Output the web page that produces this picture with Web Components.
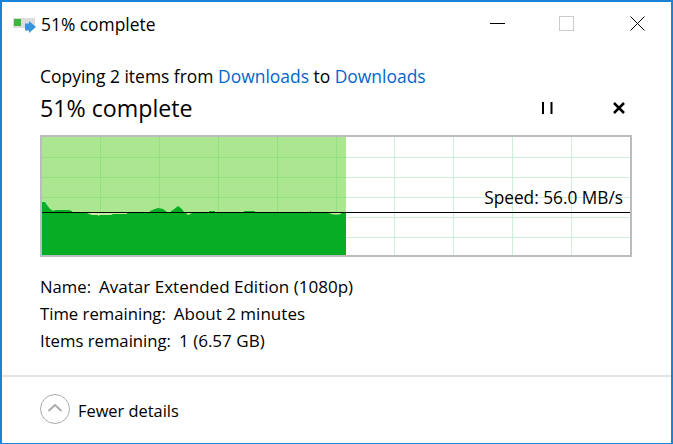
<!DOCTYPE html>
<html>
<head>
<meta charset="utf-8">
<title>51% complete</title>
<style>
html, body{ margin:0; height:100%; }
body{ font-family:"Open Sans","Noto Sans",sans-serif; color:#000; background:#fff; }
a{ color:#0066cc; }
</style>
</head>
<body>

<copy-dialog>
    <title-bar slot="title">51% complete</title-bar>

    <span slot="summary">Copying 2 items from <a>Downloads</a> to <a>Downloads</a></span>

    <progress-head slot="head">51% complete</progress-head>

    <speed-chart slot="chart" speed="Speed: 56.0 MB/s"></speed-chart>

    <detail-row slot="details" label="Name:">Avatar Extended Edition (1080p)</detail-row>
    <detail-row slot="details" label="Time remaining:">About 2 minutes</detail-row>
    <detail-row slot="details" label="Items remaining:">1 (6.57 GB)</detail-row>

    <details-toggle slot="footer">Fewer details</details-toggle>
</copy-dialog>

<script>
// #region DIALOG
class CopyDialog extends HTMLElement{
    constructor(){
        super();
        this.attachShadow( { mode: 'open' } ).innerHTML = `
<style>
:host{
    display         : flex;
    flex-direction  : column;
    box-sizing      : border-box;
    width           : 673px;
    height          : 444px;
    background      : #fff;
    border          : solid #1883d7;
    border-width    : 2px 2px 1px 2px;
    font-family     : "Open Sans", "Noto Sans", sans-serif;
    font-size       : 17px;
}
.main{
    flex            : 1;
    padding         : 19px 39px 0 38px;
}
.summary{ height:24px; line-height:24px; font-size:17.45px; white-space:nowrap; }
::slotted(span){ display:block; }
.details{
    display         : flex;
    flex-direction  : column;
    margin-top      : 16px;
}
</style>
<slot name="title"></slot>
<div class="main">
    <div class="summary"><slot name="summary"></slot></div>
    <slot name="head"></slot>
    <slot name="chart"></slot>
    <div class="details"><slot name="details"></slot></div>
</div>
<slot name="footer"></slot>`;
    }
}
customElements.define( 'copy-dialog', CopyDialog );
// #endregion

// #region TITLE BAR
class TitleBar extends HTMLElement{
    constructor(){
        super();
        this.attachShadow( { mode: 'open' } ).innerHTML = `
<style>
:host{
    display         : flex;
    align-items     : center;
    height          : 43px;
    flex            : none;
    font-size       : 17.4px;
}
.ico{ margin-left:11px; margin-right:4px; flex:none; }
.txt{ flex:1; }
.btns{ display:flex; align-items:center; margin-right:26px; }
svg{ display:block; }
</style>
<svg class="ico" width="24" height="19" viewBox="0 0 24 19">
    <rect x="0" y="4" width="22" height="10" fill="#dcdcdc"/>
    <rect x="1" y="5" width="7" height="7" fill="#3cb53c"/>
    <path d="M12 9.500h4V7L23 13 16 19V16.500H12z" fill="#3a93e0"/>
</svg>
<div class="txt"><slot></slot></div>
<div class="btns">
    <svg width="15" height="15" viewBox="0 0 15 15" style="margin-right:54px"><path d="M0 7.500H15" stroke="#000" fill="none"/></svg>
    <svg width="15" height="15" viewBox="0 0 15 15" style="margin-right:56px"><rect x=".5" y=".5" width="14" height="14" stroke="#ccc" fill="none"/></svg>
    <svg width="15" height="15" viewBox="0 0 15 15"><path d="M.5 .5L14.500 14.500M14.500 .5L.5 14.500" stroke="#000" fill="none"/></svg>
</div>`;
    }
}
customElements.define( 'title-bar', TitleBar );
// #endregion

// #region HEAD
class ProgressHead extends HTMLElement{
    constructor(){
        super();
        this.attachShadow( { mode: 'open' } ).innerHTML = `
<style>
:host{
    display         : flex;
    align-items     : center;
    height          : 30px;
    margin-top      : 5px;
    margin-bottom   : 12px;
    font-size       : 23.2px;
}
.txt{ flex:1; }
svg{ display:block; }
</style>
<div class="txt"><slot></slot></div>
<svg width="11" height="12" viewBox="0 0 11 12" style="margin-right:60px"><path d="M1 0V12M9.500 0V12" stroke="#000" stroke-width="2" fill="none"/></svg>
<svg width="12" height="12" viewBox="0 0 12 12" style="margin-right:7px"><path d="M1 1L11 11M11 1L1 11" stroke="#000" stroke-width="2.500" fill="none"/></svg>`;
    }
}
customElements.define( 'progress-head', ProgressHead );
// #endregion

// #region CHART
class SpeedChart extends HTMLElement{
    constructor(){
        super();
        const sroot = this.attachShadow( { mode: 'open' } );
        sroot.innerHTML = `
<style>
:host{
    display         : block;
    position        : relative;
    box-sizing      : border-box;
    width           : 592px;
    height          : 122px;
    border          : 2px solid #bcbcbc;
    font-size       : 17.25px;
}
svg{ display:block; }
.speed{
    position        : absolute;
    right           : 7px;
    top             : 49px;
    line-height     : 24px;
    white-space     : nowrap;
}
</style>
<svg width="588" height="118" viewBox="42 137 588 118" shape-rendering="crispEdges"></svg>
<div class="speed"></div>`;
        this._svg   = sroot.querySelector( 'svg' );
        this._speed = sroot.querySelector( '.speed' );
    }

    connectedCallback(){
        this._speed.textContent = this.getAttribute( 'speed' );
        this._svg.innerHTML     = this.draw();
    }

    draw(){
        const done = 346;
        let s = `<rect x="42" y="137" width="${done-42}" height="118" fill="#abe690"/>`;

        // grid, each line has a stronger tint over the filled part
        for( const x of [ 100, 159, 218, 277, 336, 394, 453, 512, 571 ] ){
            s += `<rect x="${x}" y="137" width="1" height="118" fill="${x < done ? '#93e081' : '#cfeeda'}"/>`;
        }
        for( let y=157; y < 250; y+=20 ){
            s += `<rect x="42" y="${y}" width="${done-42}" height="1" fill="#93e081"/>`;
            s += `<rect x="${done}" y="${y}" width="${630-done}" height="1" fill="#cfeeda"/>`;
        }

        // dips under the average line
        s += `<rect x="87" y="213" width="40" height="3" fill="#c9e9a4"/>`;
        s += `<rect x="186" y="213" width="6" height="3" fill="#c9e9a4"/>`;
        s += `<rect x="329" y="213" width="14" height="3" fill="#c9e9a4"/>`;

        const area = 'M42 255V202H45L47 205L50 209L52 210L53 211L55 210H69L72 211V212H87V213L89 214L92 215H98V216L100 215H110L111 215L113 214H127V212H150V211L155 209L158 208L163 209L167 212H171V211L173 210L178 206L182 209L184 212V213H186L188 215L192 213V212H209V211H215V212H244V211H255V212H310V211H311V212H329V213L333 214.500H339L342 213H346V255Z';
        s += `<path d="${area}" fill="#06ad25" shape-rendering="auto"/>`;
        s += `<rect x="42" y="212" width="588" height="1" fill="#000"/>`;
        return s;
    }
}
customElements.define( 'speed-chart', SpeedChart );
// #endregion

// #region DETAIL ROW
class DetailRow extends HTMLElement{
    constructor(){
        super();
        this.attachShadow( { mode: 'open' } ).innerHTML = `
<style>
:host{
    display         : flex;
    gap             : 8px;
    height          : 27px;
    line-height     : 27px;
    font-size       : 17.05px;
    white-space     : nowrap;
}
.lbl{ font-size:16.7px; }
</style>
<span class="lbl"></span><span><slot></slot></span>`;
    }
    connectedCallback(){
        this.shadowRoot.querySelector( '.lbl' ).textContent = this.getAttribute( 'label' );
    }
}
customElements.define( 'detail-row', DetailRow );
// #endregion

// #region TOGGLE
class DetailsToggle extends HTMLElement{
    constructor(){
        super();
        this.attachShadow( { mode: 'open' } ).innerHTML = `
<style>
:host{
    display         : flex;
    align-items     : center;
    gap             : 8px;
    flex            : none;
    height          : 66px;
    padding-left    : 38px;
    border-top      : 2px solid #e5e5e5;
    font-size       : 16.4px;
}
svg{ display:block; margin-bottom:2px; }
</style>
<svg width="30" height="30" viewBox="0 0 30 30">
    <circle cx="15" cy="15" r="14.500" fill="none" stroke="#aaa"/>
    <path d="M8.500 17L15 11L21.500 17" fill="none" stroke="#aaa" stroke-width="1.800"/>
</svg>
<div><slot></slot></div>`;
    }
}
customElements.define( 'details-toggle', DetailsToggle );
// #endregion
</script>
</body>
</html>
